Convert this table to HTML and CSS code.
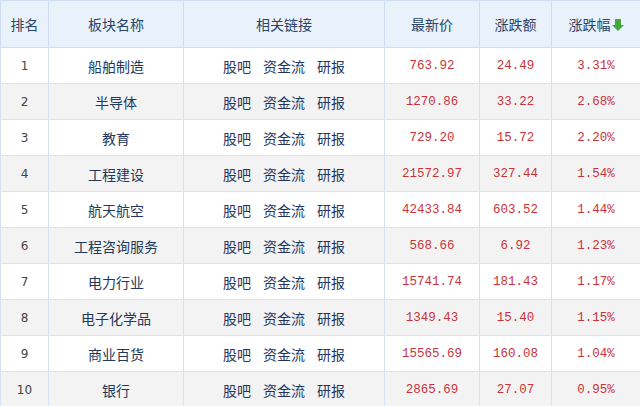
FILE: index.html
```html
<!DOCTYPE html>
<html lang="zh">
<head>
<meta charset="utf-8">
<link rel="stylesheet" href="styles.css">
</head>
<body>
<div class="wrap">
<table class="tbl">
<colgroup>
<col class="c1"><col class="c2"><col class="c3"><col class="c4"><col class="c5"><col class="c6">
</colgroup>
<thead>
<tr><th>排名</th><th>板块名称</th><th>相关链接</th><th>最新价</th><th>涨跌额</th><th>涨跌幅<svg class="arrow" width="12" height="12" viewBox="0 0 12 12"><path d="M3 0h6v6h3l-6 6L0 6h3z" fill="#43a83c"/></svg></th></tr>
</thead>
<tbody>
<tr><td class="rk">1</td><td class="nm">船舶制造</td><td class="lk"><span>股吧</span><span>资金流</span><span>研报</span></td><td class="num">763.92</td><td class="num">24.49</td><td class="num">3.31%</td></tr>
<tr><td class="rk">2</td><td class="nm">半导体</td><td class="lk"><span>股吧</span><span>资金流</span><span>研报</span></td><td class="num">1270.86</td><td class="num">33.22</td><td class="num">2.68%</td></tr>
<tr><td class="rk">3</td><td class="nm">教育</td><td class="lk"><span>股吧</span><span>资金流</span><span>研报</span></td><td class="num">729.20</td><td class="num">15.72</td><td class="num">2.20%</td></tr>
<tr><td class="rk">4</td><td class="nm">工程建设</td><td class="lk"><span>股吧</span><span>资金流</span><span>研报</span></td><td class="num">21572.97</td><td class="num">327.44</td><td class="num">1.54%</td></tr>
<tr><td class="rk">5</td><td class="nm">航天航空</td><td class="lk"><span>股吧</span><span>资金流</span><span>研报</span></td><td class="num">42433.84</td><td class="num">603.52</td><td class="num">1.44%</td></tr>
<tr><td class="rk">6</td><td class="nm">工程咨询服务</td><td class="lk"><span>股吧</span><span>资金流</span><span>研报</span></td><td class="num">568.66</td><td class="num">6.92</td><td class="num">1.23%</td></tr>
<tr><td class="rk">7</td><td class="nm">电力行业</td><td class="lk"><span>股吧</span><span>资金流</span><span>研报</span></td><td class="num">15741.74</td><td class="num">181.43</td><td class="num">1.17%</td></tr>
<tr><td class="rk">8</td><td class="nm">电子化学品</td><td class="lk"><span>股吧</span><span>资金流</span><span>研报</span></td><td class="num">1349.43</td><td class="num">15.40</td><td class="num">1.15%</td></tr>
<tr><td class="rk">9</td><td class="nm">商业百货</td><td class="lk"><span>股吧</span><span>资金流</span><span>研报</span></td><td class="num">15565.69</td><td class="num">160.08</td><td class="num">1.04%</td></tr>
<tr><td class="rk">10</td><td class="nm">银行</td><td class="lk"><span>股吧</span><span>资金流</span><span>研报</span></td><td class="num">2865.69</td><td class="num">27.07</td><td class="num">0.95%</td></tr>
</tbody>
</table>
</div>
</body>
</html>
```
FILE: styles.css
```css
html, body {
  margin: 0;
  padding: 0;
  background: #ffffff;
}
.wrap {
  width: 640px;
  height: 406px;
  overflow: hidden;
}
.tbl {
  width: 640px;
  border-collapse: collapse;
  table-layout: fixed;
  font-family: "Noto Sans CJK SC", "Noto Sans", sans-serif;
  font-size: 14px;
  color: #23395b;
}
.c1 { width: 48px; }
.c2 { width: 135px; }
.c3 { width: 201px; }
.c4 { width: 95px; }
.c5 { width: 72px; }
.c6 { width: 89px; }
.tbl th {
  height: 46px;
  padding: 0;
  background: #e9f2fb;
  font-weight: normal;
  color: #2a4468;
  border: 1px solid #cfdeee;
  text-align: center;
  white-space: nowrap;
}
.tbl td {
  height: 35px;
  padding: 0;
  text-align: center;
  border-left: 1px solid #d6e3f0;
  border-right: 1px solid #d6e3f0;
  border-bottom: 1px solid #dbe4ee;
  white-space: nowrap;
}
.tbl tbody tr:nth-child(even) td {
  background: #f3f3f3;
}
.arrow {
  vertical-align: -1px;
  margin-left: 1px;
}
.rk {
  font-family: "DejaVu Sans", sans-serif;
  font-size: 12px;
  color: #444;
}
.nm {
  color: #23395b;
}
.lk span {
  margin: 0 6px;
  color: #1f3560;
}
.num {
  font-family: "Liberation Mono", monospace;
  font-size: 12.5px;
  color: #c8333a;
}
```
